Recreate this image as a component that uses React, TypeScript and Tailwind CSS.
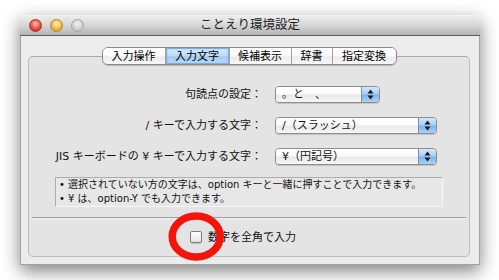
import React from "react";

const tabs = [
  { label: "入力操作", w: "w-[62px]", sel: false },
  { label: "入力文字", w: "w-[64px]", sel: true },
  { label: "候補表示", w: "w-[62px]", sel: false },
  { label: "辞書", w: "w-[41px]", sel: false },
  { label: "指定変換", w: "w-[64px]", sel: false },
];

function Arrows() {
  return (
    <svg width="7" height="11" viewBox="0 0 7 11">
      <path d="M3.5 0.5 L6.5 4.5 L0.5 4.5 Z" fill="#1a1a1a" />
      <path d="M3.5 10.5 L6.5 6.5 L0.5 6.5 Z" fill="#1a1a1a" />
    </svg>
  );
}

function Popup({ text, wide }: { text: string; wide: boolean }) {
  return (
    <div
      className={`${wide ? "w-[162px]" : "w-[105px]"} h-[17px] flex rounded-[4px] border border-[#8d8d8d] overflow-hidden shadow-[0_1px_1px_rgba(0,0,0,0.15)]`}
    >
      <div className="flex-1 flex items-center pl-[6px] text-[11px] leading-none text-[#111] bg-[linear-gradient(#ffffff_0%,#fbfbfb_45%,#eaeaea_55%,#f6f6f6_100%)]">
        {text}
      </div>
      <div className="w-[18px] flex items-center justify-center border-l border-[#6f8fb5] bg-[linear-gradient(#d4e8fb_0%,#a9cff2_45%,#7db5ea_55%,#a9d2f6_100%)]">
        <Arrows />
      </div>
    </div>
  );
}

export default function App() {
  return (
    <div className="relative w-[499px] h-[280px] bg-white pt-[15px] pl-[20px] font-[family-name:'DejaVu_Sans','Noto_Sans_CJK_JP',sans-serif] text-black">
      <div className="w-[460px] h-[250px] flex flex-col rounded-t-[5px] shadow-[0_6px_18px_rgba(0,0,0,0.5)]">
        {/* Title bar */}
        <div className="relative h-[21px] flex items-center rounded-t-[5px] border-b border-[#5e5e5e] bg-[linear-gradient(#ececec_0%,#d6d6d6_50%,#b3b3b3_100%)] border-t border-t-[#f4f4f4]">
          <div className="flex items-center gap-[8px] pl-[9px]">
            <div className="w-[13px] h-[13px] rounded-full border border-[#a8322a] bg-[radial-gradient(circle_at_50%_35%,#ffc4bc_0%,#f06a5e_40%,#cf2a1e_80%,#e2564a_100%)]" />
            <div className="w-[13px] h-[13px] rounded-full border border-[#b6852a] bg-[radial-gradient(circle_at_50%_35%,#ffeec0_0%,#f7c863_40%,#dd9a28_80%,#f0c060_100%)]" />
            <div className="w-[13px] h-[13px] rounded-full border border-[#a3a3a3] bg-[radial-gradient(circle_at_50%_35%,#f2f2f2_0%,#d4d4d4_50%,#bdbdbd_100%)]" />
          </div>
          <div className="flex-1 text-center text-[12.5px] leading-none text-[#1c1c1c] pr-[64px]">
            ことえり環境設定
          </div>
        </div>
        {/* Body */}
        <div className="flex-1 flex flex-col bg-[#ececec] border-x border-b border-[#a2a2a2] pl-[7px]">
          {/* Tabs */}
          <div className="relative z-10 mt-[11px] flex justify-center pr-[9px]">
            <div className="flex h-[18px] rounded-[6px] border border-[#8a8a8a] overflow-hidden shadow-[0_1px_1px_rgba(0,0,0,0.2)]">
              {tabs.map((t, i) => (
                <div
                  key={t.label}
                  className={`${t.w} flex items-center justify-center text-[11px] leading-none ${
                    i > 0 ? "border-l border-[#a0a0a0]" : ""
                  } ${
                    t.sel
                      ? "bg-[linear-gradient(#dcecfc_0%,#bcd9f6_50%,#a2c9f1_55%,#c2def8_100%)] shadow-[inset_0_0_0_1px_#7aaee4,inset_0_0_3px_#5f9de0]"
                      : "bg-[linear-gradient(#ffffff_0%,#f9f9f9_50%,#ececec_55%,#f7f7f7_100%)]"
                  }`}
                >
                  {t.label}
                </div>
              ))}
            </div>
          </div>
          {/* Group box */}
          <div className="-mt-[9px] w-[442px] h-[201px] flex flex-col rounded-[5px] border border-[#bdbdbd] border-t-[#aaaaaa] bg-[#e4e4e4]">
            <div className="mt-[29px] flex flex-col gap-[14px]">
              {[
                { l: "句読点の設定：", v: "。と　、", wide: false },
                { l: "/ キーで入力する文字：", v: "/（スラッシュ）", wide: true },
                { l: "JIS キーボードの ¥ キーで入力する文字：", v: "¥（円記号）", wide: true },
              ].map((r) => (
                <div key={r.l} className="flex items-center h-[17px]">
                  <div className="w-[233px] text-right text-[11px] leading-none text-[#111] whitespace-nowrap">
                    {r.l}
                  </div>
                  <div className="ml-[13px]">
                    <Popup text={r.v} wide={r.wide} />
                  </div>
                </div>
              ))}
            </div>
            {/* Info box */}
            <div className="mt-[12px] mx-[26px] h-[30px] flex flex-col justify-center gap-[2px] pl-[3px] border border-[#acacac] border-r-[#f7f7f7] border-b-[#f7f7f7] bg-[#e7e7e7] text-[10px] leading-[12px] text-[#111]">
              <div className="whitespace-nowrap">• 選択されていない方の文字は、option キーと一緒に押すことで入力できます。</div>
              <div className="whitespace-nowrap">• ¥ は、option-Y でも入力できます。</div>
            </div>
            {/* Divider */}
            <div className="mt-[10px] mx-[3px] h-[2px] border-t border-[#9a9a9a] border-b border-b-[#f4f4f4]" />
            {/* Checkbox row */}
            <div className="mt-[12px] flex items-center justify-center gap-[6px] pr-[12px]">
              <div className="w-[12px] h-[12px] rounded-[2px] border border-[#7c7c7c] bg-[linear-gradient(#ffffff_0%,#f4f4f4_50%,#e2e2e2_100%)] shadow-[0_1px_1px_rgba(0,0,0,0.15)]" />
              <div className="text-[11px] leading-none text-[#111]">数字を全角で入力</div>
            </div>
          </div>
        </div>
      </div>
      {/* Red annotation ring */}
      <svg className="absolute left-[166px] top-[210px]" width="62" height="54" viewBox="0 0 62 54">
        <ellipse cx="30.2" cy="26.5" rx="24" ry="20.5" fill="none" stroke="#f4140c" strokeWidth="7.5" />
      </svg>
    </div>
  );
}
